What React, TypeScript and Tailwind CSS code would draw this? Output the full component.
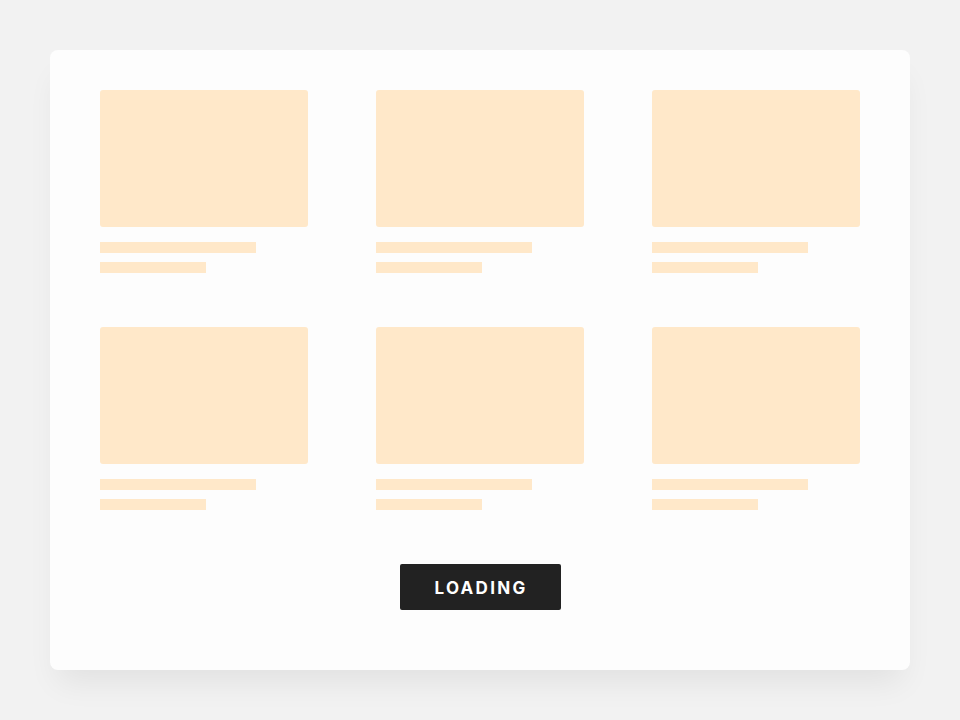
import React from "react"

const items = [1, 2, 3, 4, 5, 6]

function SkeletonCard() {
  return (
    <div className="flex flex-col">
      <div className="h-[137px] w-[208px] rounded-[3px] bg-[#ffe8c9]" />
      <div className="mt-[15px] h-[11px] w-[156px] bg-[#ffe8c9]" />
      <div className="mt-[9px] h-[11px] w-[106px] bg-[#ffe8c9]" />
    </div>
  )
}

export default function App() {
  return (
    <div className="min-h-[720px] w-full bg-[#f2f2f2] p-[50px]">
      <div className="flex h-[620px] w-[860px] flex-col items-center rounded-[8px] bg-[#fdfdfd] px-[50px] pt-[40px] shadow-[0_20px_30px_-8px_rgba(0,0,0,0.07)]">
        <div className="grid grid-cols-[208px_208px_208px] gap-x-[68px] gap-y-[54px]">
          {items.map((i) => (
            <SkeletonCard key={i} />
          ))}
        </div>
        <button className="mt-[54px] flex h-[46px] w-[161px] items-center justify-center rounded-[2px] bg-[#222222] pt-[3px] pl-[2px] text-[17px] font-bold tracking-[2.3px] text-white [font-family:Inter,sans-serif]">
          LOADING
        </button>
      </div>
    </div>
  )
}
